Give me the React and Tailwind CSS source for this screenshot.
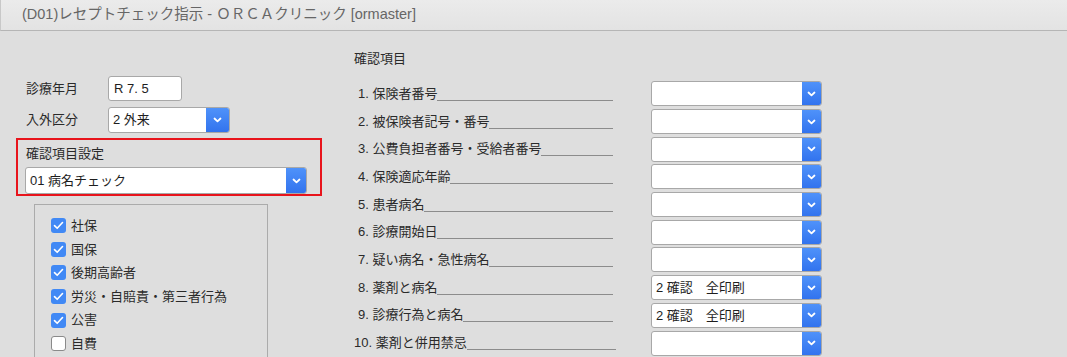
import React from "react";

const FONT = { fontFamily: '"Liberation Sans", "Noto Sans CJK JP", sans-serif' };

function Chevron() {
  return (
    <svg width="9" height="6" viewBox="0 0 9 6" fill="none">
      <path d="M1.5 1.5 L4.5 4.3 L7.5 1.5" stroke="white" strokeWidth="1.8" strokeLinecap="round" strokeLinejoin="round" />
    </svg>
  );
}

function Select({ value, w, h, btn }) {
  return (
    <div
      className="flex bg-white border border-[#a8a8a8] rounded-[3px] overflow-hidden shrink-0"
      style={{ width: w, height: h }}
    >
      <div className="flex-1 flex items-center pl-[4px] text-[13px] text-[#1e1e1e] whitespace-pre">{value}</div>
      <div
        className="flex items-center justify-center bg-gradient-to-b from-[#4f92fa] to-[#3273ee]"
        style={{ width: btn }}
      >
        <Chevron />
      </div>
    </div>
  );
}

function Check({ checked, label }) {
  return (
    <div className="flex items-center h-[23.6px] gap-[5px]">
      {checked ? (
        <div className="w-[15px] h-[15px] rounded-[3px] bg-[#4189f5] flex items-center justify-center">
          <svg width="11" height="9" viewBox="0 0 11 9" fill="none">
            <path d="M1.5 4.6 L4.2 7.3 L9.5 1.5" stroke="white" strokeWidth="1.6" strokeLinecap="round" strokeLinejoin="round" />
          </svg>
        </div>
      ) : (
        <div className="w-[15px] h-[15px] rounded-[3px] bg-white border border-[#8a8a8a]" />
      )}
      <span className="text-[13px] text-[#2a2a2a]">{label}</span>
    </div>
  );
}

const items = [
  ["1. 保険者番号", ""],
  ["2. 被保険者記号・番号", ""],
  ["3. 公費負担者番号・受給者番号", ""],
  ["4. 保険適応年齢", ""],
  ["5. 患者病名", ""],
  ["6. 診療開始日", ""],
  ["7. 疑い病名・急性病名", ""],
  ["8. 薬剤と病名", "2 確認　全印刷"],
  ["9. 診療行為と病名", "2 確認　全印刷"],
  ["10. 薬剤と併用禁忌", ""],
];

export default function App() {
  return (
    <div className="w-[1067px] h-[357px] overflow-hidden bg-[#dedede]" style={FONT}>
      <div className="h-[31px] border-b border-[#b5b5b5] border-l border-l-[#c8c8c8] bg-gradient-to-b from-[#ebebeb] to-[#e3e3e3] flex items-center pl-[21px] text-[14.5px] text-[#666]">
        (D01)レセプトチェック指示 - ＯＲＣＡクリニック [ormaster]
      </div>
      <div className="flex">
        <div className="w-[354px] shrink-0 pt-[45px] pl-[16px]">
          <div className="flex items-center h-[25px]">
            <div className="w-[92px] pl-[10px] text-[13px] text-[#2a2a2a]">診療年月</div>
            <div className="w-[74px] h-[25px] bg-white border border-[#a8a8a8] rounded-[3px] flex items-center pl-[5px] text-[13px] text-[#1e1e1e]">
              R 7. 5
            </div>
          </div>
          <div className="flex items-center h-[26px] mt-[6px]">
            <div className="w-[92px] pl-[10px] text-[13px] text-[#2a2a2a]">入外区分</div>
            <Select value="2 外来" w={122} h={26} btn={23} />
          </div>
          <div className="mt-[5px] w-[306px] h-[58px] border-2 border-[#e8141c] pl-[7px] pt-[3px]">
            <div className="h-[22px] flex items-center pl-[1px] text-[13px] text-[#2a2a2a]">確認項目設定</div>
            <div className="mt-[2px]">
              <Select value="01 病名チェック" w={282} h={27} btn={20} />
            </div>
          </div>
          <div className="mt-[8px] ml-[18px] w-[234px] h-[200px] border border-[#ababab] pl-[16px] pt-[9px]">
            <Check checked label="社保" />
            <Check checked label="国保" />
            <Check checked label="後期高齢者" />
            <Check checked label="労災・自賠責・第三者行為" />
            <Check checked label="公害" />
            <Check checked={false} label="自費" />
          </div>
        </div>
        <div className="flex-1">
          <div className="mt-[18px] h-[20px] flex items-center text-[13px] text-[#2a2a2a]">確認項目</div>
          <div className="mt-[11px]">
            {items.map(([label, val], i) => (
              <div key={i} className="flex items-center h-[27.7px]">
                <div
                  className={`flex items-end h-[16px] ${i === 9 ? "w-[262px]" : "w-[259px] pl-[4px]"}`}
                >
                  <span className="text-[13px] leading-[16px] text-[#2a2a2a] whitespace-nowrap">{label}</span>
                  <span className="flex-1 border-b border-[#8c8c8c] mb-[1px]" />
                </div>
                <div className={i === 9 ? "ml-[35px]" : "ml-[38px]"}>
                  <Select value={val} w={171} h={25} btn={19} />
                </div>
              </div>
            ))}
          </div>
        </div>
      </div>
    </div>
  );
}
